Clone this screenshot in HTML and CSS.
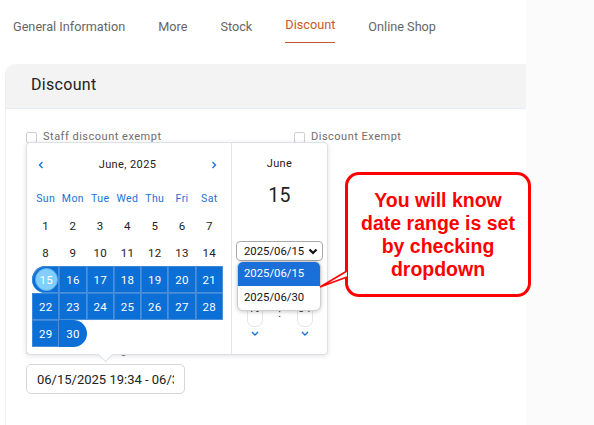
FILE: index.html
```html
<!DOCTYPE html>
<html lang="en">
<head>
  <meta charset="UTF-8" />
  <meta name="viewport" content="width=device-width, initial-scale=1.0" />
  <title>Discount</title>
  <link rel="stylesheet" href="styles.css">
</head>
<body>
  <div class="page">
    <nav class="tabs">
      <a class="tab">General Information</a>
      <a class="tab">More</a>
      <a class="tab">Stock</a>
      <a class="tab active">Discount</a>
      <a class="tab">Online Shop</a>
    </nav>

    <section class="card">
      <div class="card-head">Discount</div>
      <div class="card-body">
        <div class="checks">
          <label class="check first"><span class="box"></span>Staff discount exempt</label>
          <label class="check"><span class="box"></span>Discount Exempt</label>
        </div>

        <div class="field">
          <div class="field-label">Discount date range</div>
          <input class="range-input" type="text" value="06/15/2025 19:34 - 06/30/2025 23:59" readonly />
        </div>

        <!-- date range picker popup -->
        <div class="picker">
          <div class="cal">
            <div class="cal-head">
              <svg class="nav" width="6" height="8" viewBox="0 0 6 8"><path d="M4.5 1 L1.5 4 L4.5 7" /></svg>
              <span class="cal-title">June, 2025</span>
              <svg class="nav" width="6" height="8" viewBox="0 0 6 8"><path d="M1.5 1 L4.5 4 L1.5 7" /></svg>
            </div>
            <div class="weekdays">
              <span>Sun</span><span>Mon</span><span>Tue</span><span>Wed</span><span>Thu</span><span>Fri</span><span>Sat</span>
            </div>
            <div class="days">
              <span class="day">1</span><span class="day">2</span><span class="day">3</span><span class="day">4</span><span class="day">5</span><span class="day">6</span><span class="day">7</span>
              <span class="day">8</span><span class="day">9</span><span class="day">10</span><span class="day">11</span><span class="day">12</span><span class="day">13</span><span class="day">14</span>
              <span class="day sel start"><span class="dot">15</span></span><span class="day sel">16</span><span class="day sel">17</span><span class="day sel">18</span><span class="day sel">19</span><span class="day sel">20</span><span class="day sel">21</span>
              <span class="day sel">22</span><span class="day sel">23</span><span class="day sel">24</span><span class="day sel">25</span><span class="day sel">26</span><span class="day sel">27</span><span class="day sel">28</span>
              <span class="day sel">29</span><span class="day sel end">30</span>
            </div>
          </div>

          <div class="side">
            <div class="side-month">June</div>
            <div class="side-day">15</div>
            <div class="select-wrap">
              <div class="select">
                <span>2025/06/15</span>
                <svg width="10" height="7" viewBox="0 0 10 7"><path d="M1.5 1.5 L5 5 L8.5 1.5" /></svg>
              </div>
              <ul class="options">
                <li class="opt on">2025/06/15</li>
                <li class="opt">2025/06/30</li>
              </ul>
            </div>
            <div class="time">
              <div class="spin">
                <svg class="chev" width="8" height="5" viewBox="0 0 8 5"><path d="M1 4 L4 1 L7 4" /></svg>
                <div class="spin-box">19</div>
                <svg class="chev" width="8" height="5" viewBox="0 0 8 5"><path d="M1 1 L4 4 L7 1" /></svg>
              </div>
              <div class="colon">:</div>
              <div class="spin">
                <svg class="chev" width="8" height="5" viewBox="0 0 8 5"><path d="M1 4 L4 1 L7 4" /></svg>
                <div class="spin-box">34</div>
                <svg class="chev" width="8" height="5" viewBox="0 0 8 5"><path d="M1 1 L4 4 L7 1" /></svg>
              </div>
            </div>
          </div>
          <span class="picker-arrow"></span>
        </div>
      </div>
    </section>

    <!-- annotation -->
    <svg class="callout-tail" width="34" height="26" viewBox="0 0 34 26"><path d="M31 5 L4 21 L31 11" /></svg>
    <div class="callout">You will know<br>date range is set<br>by checking<br>dropdown</div>
  </div>
</body>
</html>
```

FILE: styles.css
```css
body {
  margin: 0;
  background: #fbfbfb;
  font-family: Roboto, "Noto Sans", sans-serif;
  color: #222;
}
.page {
  position: relative;
  width: 526px;
  height: 425px;
  background: #fff;
}

/* tabs */
.tabs {
  display: flex;
  height: 64px;
  padding-left: 13px;
  box-sizing: border-box;
}
.tab {
  font-size: 12.7px;
  line-height: 16px;
  color: #666;
  padding-top: 19px;
  margin-right: 33px;
}
.tab.active {
  color: #c65a28;
  padding-top: 17px;
  height: 25px;
  border-bottom: 1.5px solid #c65a28;
}

/* card */
.card {
  margin-left: 5px;
  border-left: 1px solid #f0f0f0;
  border-top-left-radius: 10px;
}
.card-head {
  height: 44px;
  line-height: 42px;
  padding-left: 25px;
  background: #f3f3f3;
  border-bottom: 1px solid #e7eef6;
  border-top-left-radius: 10px;
  font-size: 16px;
  letter-spacing: 0.3px;
  color: #222;
}
.card-body {
  position: relative;
  padding: 21px 20px 0 20px;
  height: 316px;
}
.checks {
  display: flex;
}
.check {
  display: flex;
  align-items: center;
  font-size: 11px;
  line-height: 14px;
  letter-spacing: 0.5px;
  color: #6e6e6e;
}
.check.first {
  width: 268px;
}
.box {
  width: 9px;
  height: 9px;
  border: 1px solid #cfcfcf;
  border-radius: 2px;
  margin-right: 6px;
}

.field {
  margin-top: 200px;
}
.field-label {
  font-size: 11px;
  line-height: 14px;
  letter-spacing: 0.5px;
  color: #777;
}
.range-input {
  display: block;
  margin-top: 6px;
  width: 159px;
  height: 30px;
  box-sizing: border-box;
  padding: 0 10px 0 10px;
  border: 1px solid #d6d6d6;
  border-radius: 5px;
  font-family: Roboto, sans-serif;
  font-size: 13px;
  color: #222;
  outline: none;
}

/* picker popup */
.picker {
  position: absolute;
  top: 33px;
  left: 20px;
  width: 302px;
  display: flex;
  background: #fff;
  border: 1px solid #dde1e7;
  border-radius: 4px;
  box-shadow: 0 1px 5px rgba(0, 0, 0, 0.12);
  box-sizing: border-box;
}
.cal {
  width: 205px;
  box-sizing: border-box;
  padding: 0 7px 7px 5px;
  border-right: 1px solid #e2e5ea;
}
.cal-head {
  height: 43px;
  display: flex;
  align-items: center;
  justify-content: space-between;
  padding: 0 7px 0 6px;
}
.nav path,
.chev path {
  fill: none;
  stroke: #1a73d6;
  stroke-width: 1.4;
}
.cal-title {
  font-size: 11px;
  letter-spacing: 0.4px;
  color: #222;
}
.weekdays,
.days {
  width: 191px;
  display: grid;
  grid-template-columns: repeat(7, 1fr);
}
.weekdays span {
  height: 26px;
  line-height: 26px;
  text-align: center;
  font-size: 10.5px;
  letter-spacing: 0.4px;
  color: #1a73d6;
}
.day {
  height: 27px;
  display: flex;
  align-items: center;
  justify-content: center;
  font-size: 11.5px;
  letter-spacing: 0.3px;
  color: #222;
  box-sizing: border-box;
}
.day.sel {
  background: #0b6fd6;
  color: #fff;
  box-shadow: inset -1px -1px 0 #4a8fdb, inset 1px 1px 0 #3d86d8;
}
.day.start {
  border-radius: 13.5px 0 0 13.5px;
}
.day.end {
  border-radius: 0 13.5px 13.5px 0;
  box-shadow: none;
}
.dot {
  width: 21px;
  height: 21px;
  border-radius: 50%;
  background: #80cffd;
  border: 1px solid #5aaeea;
  display: flex;
  align-items: center;
  justify-content: center;
  margin-left: 1px;
}

.side {
  flex: 1;
  display: flex;
  flex-direction: column;
  align-items: center;
}
.side-month {
  margin-top: 14px;
  font-size: 11px;
  line-height: 14px;
  letter-spacing: 0.4px;
}
.side-day {
  margin-top: 13px;
  font-size: 19.5px;
  line-height: 24px;
  letter-spacing: 0.3px;
}
.select-wrap {
  position: relative;
  margin-top: 33px;
}
.select {
  width: 87px;
  height: 20px;
  box-sizing: border-box;
  border: 1px solid #a9a9a9;
  border-radius: 4px;
  display: flex;
  align-items: center;
  justify-content: space-between;
  padding: 0 4px 0 7px;
  font-size: 11.3px;
  color: #111;
}
.select path {
  fill: none;
  stroke: #111;
  stroke-width: 2.2;
}
.options {
  position: absolute;
  top: 20px;
  left: 1px;
  width: 84px;
  margin: 0;
  padding: 0;
  list-style: none;
  background: #fff;
  border: 1px solid #cfcfcf;
  border-radius: 6px;
  box-shadow: 0 1px 4px rgba(0, 0, 0, 0.2);
  box-sizing: border-box;
  z-index: 2;
}
.opt {
  height: 24px;
  line-height: 24px;
  padding-left: 6px;
  font-size: 11.3px;
  color: #111;
}
.opt.on {
  background: #1b6fd8;
  color: #fff;
  border-radius: 5px 5px 0 0;
}

.time {
  display: flex;
  margin-top: 27px;
}
.spin {
  width: 30px;
  display: flex;
  flex-direction: column;
  align-items: center;
}
.spin-box {
  margin: 4px 0;
  width: 16px;
  height: 30px;
  box-sizing: border-box;
  border: 1px solid #e4e4e4;
  border-radius: 7px;
  font-size: 11px;
  line-height: 22px;
  text-align: center;
}
.colon {
  width: 20px;
  text-align: center;
  font-size: 11px;
  padding-top: 19px;
}
.picker-arrow {
  position: absolute;
  left: 73px;
  bottom: -6px;
  width: 10px;
  height: 10px;
  background: #fff;
  border-right: 1px solid #dde1e7;
  border-bottom: 1px solid #dde1e7;
  transform: rotate(45deg);
}

/* annotation */
.callout {
  position: absolute;
  left: 345px;
  top: 172px;
  width: 186px;
  height: 125px;
  box-sizing: border-box;
  border: 3px solid #ff0000;
  border-radius: 14px;
  background: #fff;
  display: flex;
  align-items: center;
  justify-content: center;
  text-align: center;
  font-family: "Liberation Sans", Arial, sans-serif;
  font-weight: bold;
  font-size: 19.5px;
  line-height: 23px;
  color: #ff0000;
}
.callout-tail {
  position: absolute;
  left: 316px;
  top: 266px;
  z-index: 3;
}
.callout-tail path {
  fill: #fff;
  stroke: #ff0000;
  stroke-width: 1.5;
}
```
